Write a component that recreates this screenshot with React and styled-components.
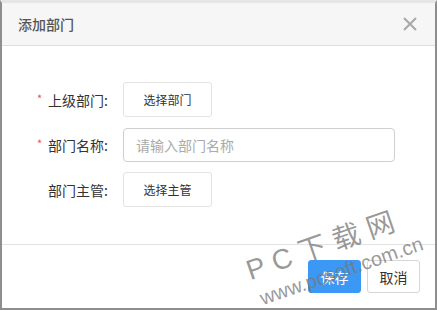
import React from 'react';
import styled, { createGlobalStyle } from 'styled-components';

const Global = createGlobalStyle`
  *, *::before, *::after { box-sizing: border-box; }
  html, body { margin: 0; padding: 0; background: #fff; }
  body { font-family: "Noto Sans CJK SC", "Liberation Sans", sans-serif; }
`;

const Frame = styled.div`
  position: relative;
  width: 437px;
  height: 310px;
  border: 2px solid #8e8e8e;
  border-top: 3px solid #e6e6e6;
  background: #fff;
  display: flex;
  flex-direction: column;
  overflow: hidden;
`;

const Header = styled.div`
  height: 43px;
  flex-shrink: 0;
  background: #f6f6f6;
  border-bottom: 1px solid #dedede;
  display: flex;
  align-items: center;
  justify-content: space-between;
  padding: 0 18px 0 16px;
`;

const Title = styled.div`
  font-size: 14px;
  color: #555;
  font-weight: 500;
`;

const Close = styled.button`
  border: 0;
  background: none;
  padding: 0;
  width: 14px;
  height: 14px;
  display: flex;
  svg { display: block; }
`;

const Body = styled.div`
  flex: 1;
  padding-top: 36px;
`;

const Form = styled.div`
  display: grid;
  grid-template-columns: 106px 272px;
  grid-auto-rows: 35px;
  column-gap: 15px;
  row-gap: 10px;
`;

const Label = styled.div`
  display: flex;
  align-items: center;
  justify-content: flex-end;
  font-size: 14px;
  color: #333;
  gap: 6px;
`;

const Star = styled.span`
  color: #e85050;
  font-size: 11px;
  margin-top: -4px;
`;

const Picker = styled.button`
  width: 89px;
  height: 35px;
  border: 1px solid #e3e3e3;
  border-radius: 3px;
  background: #fff;
  font-family: inherit;
  font-size: 12px;
  color: #333;
  padding: 0;
`;

const Input = styled.input`
  align-self: center;
  width: 272px;
  height: 34px;
  border: 1px solid #cfcfcf;
  border-radius: 4px;
  padding: 0 12px;
  font-family: inherit;
  font-size: 14px;
  outline: none;
  &::placeholder { color: #aaa; }
`;

const Footer = styled.div`
  height: 64px;
  flex-shrink: 0;
  border-top: 1px solid #e2e2e2;
  display: flex;
  justify-content: flex-end;
  align-items: flex-start;
  padding: 15px 15px 0 0;
  gap: 6px;
`;

const Btn = styled.button`
  width: 53px;
  height: 33px;
  border-radius: 3px;
  font-family: inherit;
  font-size: 14px;
  padding: 0;
  border: 1px solid ${p => (p.$primary ? '#3b98f5' : '#d6d6d6')};
  background: ${p => (p.$primary ? '#3b98f5' : '#fff')};
  color: ${p => (p.$primary ? '#fff' : '#333')};
`;

const Mark = styled.div`
  position: absolute;
  pointer-events: none;
  color: rgba(120, 120, 120, 0.75);
  font-family: "Liberation Sans", "Noto Sans CJK SC", sans-serif;
  white-space: nowrap;
  transform-origin: left bottom;
  transform: rotate(-19deg);
`;

const MarkBig = styled(Mark)`
  left: 250px;
  top: 254px;
  font-size: 28px;
  line-height: 28px;
  letter-spacing: 8px;
`;

const MarkUrl = styled(Mark)`
  left: 262px;
  top: 284px;
  font-size: 20px;
  line-height: 22px;
`;

export default function App() {
  return (
    <>
      <Global />
      <Frame>
        <Header>
          <Title>添加部门</Title>
          <Close aria-label="close">
            <svg width="14" height="14" viewBox="0 0 14 14">
              <path d="M1 1L13 13M13 1L1 13" stroke="#a8a8a8" strokeWidth="2" />
            </svg>
          </Close>
        </Header>
        <Body>
          <Form>
            <Label><Star>*</Star>上级部门:</Label>
            <Picker>选择部门</Picker>
            <Label><Star>*</Star>部门名称:</Label>
            <Input placeholder="请输入部门名称" />
            <Label>部门主管:</Label>
            <Picker>选择主管</Picker>
          </Form>
        </Body>
        <Footer>
          <Btn $primary>保存</Btn>
          <Btn>取消</Btn>
        </Footer>
        <MarkBig>PC下载网</MarkBig>
        <MarkUrl>www.pcsoft.com.cn</MarkUrl>
      </Frame>
    </>
  );
}
